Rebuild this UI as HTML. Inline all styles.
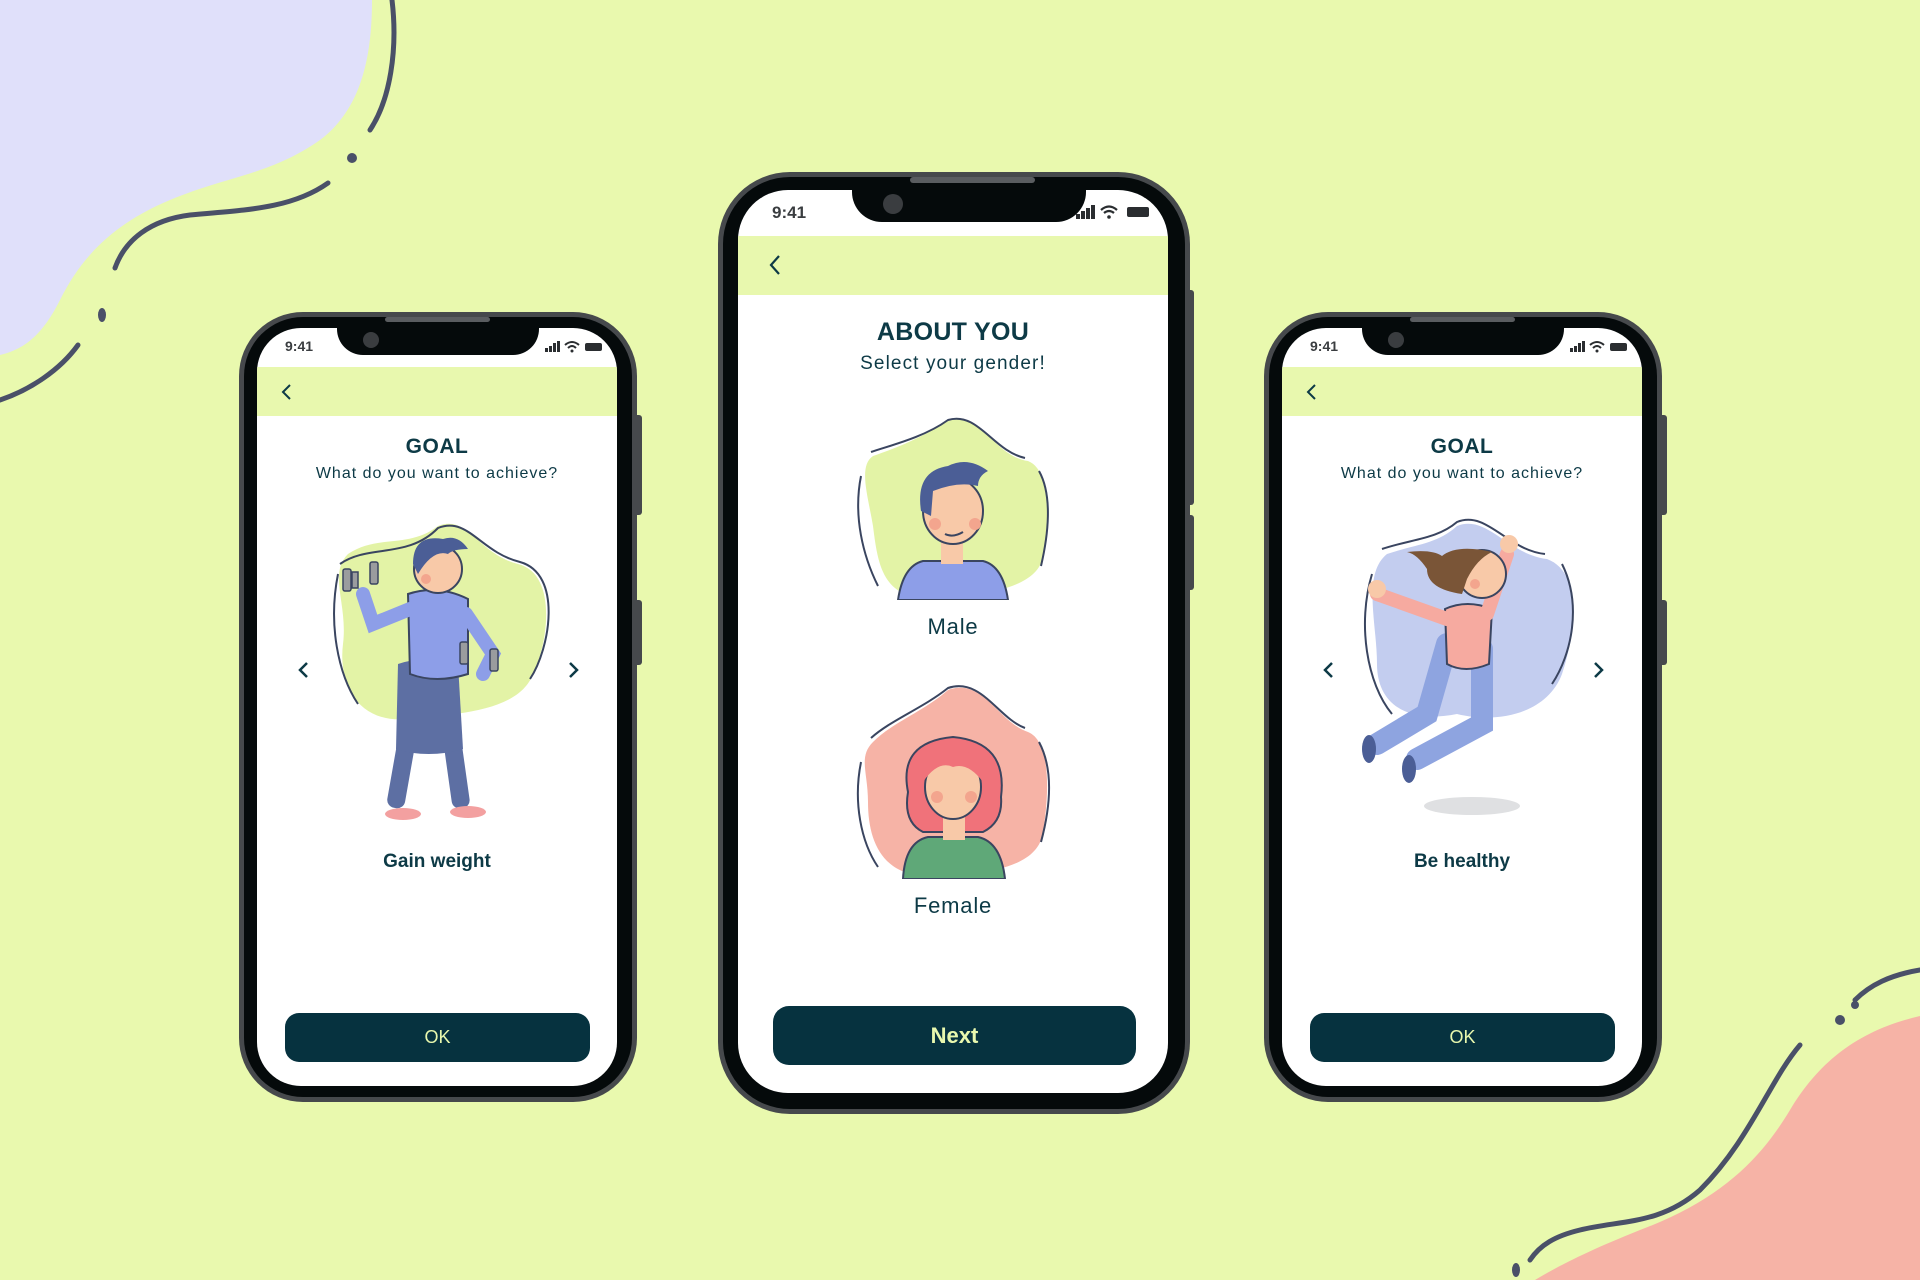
<!DOCTYPE html>
<html><head><meta charset="utf-8"><style>
*{margin:0;padding:0;box-sizing:border-box}
body{width:1920px;height:1280px;background:#e9f9ae;position:relative;overflow:hidden;font-family:"Liberation Sans",sans-serif;color:#0d3a46}
.ph{position:absolute;background:#46494c;border-radius:64px}
.bz{position:absolute;inset:5px;background:#050a0b;border-radius:59px}
.sc{position:absolute;background:#fff;border-radius:44px;overflow:hidden}
.hd{position:absolute;left:0;right:0;background:#e8f8ae}
.notch{position:absolute;background:#050a0b;border-radius:0 0 26px 26px}
.cam{position:absolute;background:#3a3d40;border-radius:50%}
.spk{position:absolute;background:#5a5d60;border-radius:3px}
.t{position:absolute;font-weight:bold;color:#3a3d40}
.c{position:absolute;left:0;right:0;text-align:center}
.btn{position:absolute;background:#06323f;color:#e8f8ae;text-align:center;border-radius:14px}
.side{position:absolute;background:#46494c;width:6px;border-radius:0 3px 3px 0}
</style></head><body>

<svg width="1920" height="1280" style="position:absolute;left:0;top:0">
<path d="M0 0 H372 C372 60 360 110 320 140 C270 175 230 175 170 200 C110 225 80 260 60 300 C40 340 20 350 0 355 Z" fill="#e0e0fa"/>
<path d="M392 0 C398 50 390 100 370 130" stroke="#4a5068" stroke-width="5" fill="none" stroke-linecap="round"/>
<path d="M328 183 C290 210 240 210 190 215 C150 220 125 240 115 268" stroke="#4a5068" stroke-width="5" fill="none" stroke-linecap="round"/>
<circle cx="352" cy="158" r="5" fill="#4a5068"/>
<ellipse cx="102" cy="315" rx="4" ry="7" fill="#4a5068"/>
<path d="M78 345 C60 370 30 390 0 400" stroke="#4a5068" stroke-width="5" fill="none" stroke-linecap="round"/>
<path d="M1920 1016 C1860 1030 1820 1060 1790 1110 C1760 1160 1720 1200 1640 1230 C1590 1250 1560 1265 1535 1280 H1920 Z" fill="#f6b3a6"/>
<path d="M1800 1045 C1770 1080 1750 1140 1700 1190 C1660 1225 1620 1220 1580 1230 C1555 1236 1540 1245 1530 1260" stroke="#4a5068" stroke-width="5" fill="none" stroke-linecap="round"/>
<path d="M1920 970 C1890 975 1870 985 1855 1000" stroke="#4a5068" stroke-width="5" fill="none" stroke-linecap="round"/>
<circle cx="1840" cy="1020" r="5" fill="#4a5068"/><circle cx="1855" cy="1005" r="4" fill="#4a5068"/>
<ellipse cx="1516" cy="1270" rx="4" ry="7" fill="#4a5068"/>
</svg>

<!-- LEFT PHONE -->
<div class="side" style="left:636px;top:415px;height:100px"></div>
<div class="side" style="left:636px;top:600px;height:65px"></div>
<div class="ph" style="left:239px;top:312px;width:398px;height:790px"><div class="bz"></div>
<div class="sc" style="left:18px;top:16px;width:360px;height:758px">
  <div class="hd" style="top:39px;height:49px"></div>
  <div class="t" style="left:28px;top:10px;font-size:14px">9:41</div>
  <svg style="position:absolute;left:288px;top:12px" width="62" height="14"><rect x="0" y="8" width="3" height="4" fill="#2a2d30"/><rect x="4" y="6" width="3" height="6" fill="#2a2d30"/><rect x="8" y="3" width="3" height="9" fill="#2a2d30"/><rect x="12" y="1" width="3" height="11" fill="#2a2d30"/><path d="M20 5 Q27 -1 34 5 M23 8 Q27 4 31 8" stroke="#2a2d30" stroke-width="2" fill="none"/><circle cx="27" cy="11" r="1.5" fill="#2a2d30"/><rect x="40" y="3" width="17" height="8" rx="2" fill="#2a2d30"/></svg>
  <svg style="position:absolute;left:22px;top:55px" width="16" height="18"><path d="M11 2 L4 9 L11 16" stroke="#0d3a46" stroke-width="2" fill="none"/></svg>
  <div class="c" style="top:107px;font-size:21px;font-weight:bold;letter-spacing:0.5px">GOAL</div>
  <div class="c" style="top:137px;font-size:16px;letter-spacing:1px">What do you want to achieve?</div>
  <svg style="position:absolute;left:40px;top:333px" width="14" height="18"><path d="M10 2 L3 9 L10 16" stroke="#0d3a46" stroke-width="2.5" fill="none"/></svg>
  <svg style="position:absolute;left:309px;top:333px" width="14" height="18"><path d="M4 2 L11 9 L4 16" stroke="#0d3a46" stroke-width="2.5" fill="none"/></svg>
  <svg style="position:absolute;left:61px;top:186px" width="240" height="312" viewBox="0 0 240 312">
    <path d="M30 40 C60 20 90 35 120 12 C150 0 160 40 200 50 C240 60 230 130 215 160 C200 200 130 200 90 205 C40 210 20 170 25 130 C30 90 10 60 30 40Z" fill="#e3f3a6"/>
    <path d="M22 50 C50 30 90 45 120 14 C150 2 162 38 202 48 C245 60 232 135 212 165 M20 60 C10 110 20 160 40 190" stroke="#3a4560" stroke-width="2" fill="none"/>
    <rect x="80" y="225" width="18" height="70" rx="8" fill="#5d6fa3" transform="rotate(10 89 225)"/>
    <rect x="125" y="225" width="18" height="70" rx="8" fill="#5d6fa3" transform="rotate(-8 134 225)"/>
    <path d="M80 150 Q110 140 140 150 L145 235 Q110 245 78 235Z" fill="#5d6fa3"/>
    <path d="M90 80 Q120 70 150 85 L150 160 Q118 170 92 160Z" fill="#8d9ee8" stroke="#3a4560" stroke-width="2"/>
    <path d="M92 95 L55 110 L45 80" stroke="#8d9ee8" stroke-width="14" fill="none" stroke-linecap="round"/>
    <path d="M148 100 L175 140 L165 160" stroke="#8d9ee8" stroke-width="14" fill="none" stroke-linecap="round"/>
    <circle cx="120" cy="55" r="24" fill="#f8c9a8" stroke="#3a4560" stroke-width="2"/>
    <path d="M95 50 Q95 20 125 25 Q140 20 150 35 Q135 35 130 40 Q115 35 100 60Z" fill="#4b5e96"/>
    <circle cx="108" cy="65" r="5" fill="#f3a58e"/>
    <g fill="#9a9c9e" stroke="#3a4560" stroke-width="1.5"><rect x="25" y="55" width="8" height="22" rx="2"/><rect x="34" y="58" width="6" height="16"/><rect x="52" y="48" width="8" height="22" rx="2"/><rect x="142" y="128" width="8" height="22" rx="2"/><rect x="172" y="135" width="8" height="22" rx="2"/></g>
    <ellipse cx="85" cy="300" rx="18" ry="6" fill="#f3a0a0"/><ellipse cx="150" cy="298" rx="18" ry="6" fill="#f3a0a0"/>
  </svg>
  <div class="c" style="top:523px;font-size:19px;font-weight:bold">Gain weight</div>
  <div class="btn" style="left:28px;top:685px;width:305px;height:49px;line-height:49px;font-size:18px">OK</div>
</div>
<div class="notch" style="left:98px;top:16px;width:202px;height:27px"></div>
<div class="cam" style="left:124px;top:20px;width:16px;height:16px"></div>
<div class="spk" style="left:146px;top:5px;width:105px;height:5px"></div>
</div>

<!-- CENTER PHONE -->
<div class="side" style="left:1188px;top:290px;height:215px"></div>
<div class="side" style="left:1188px;top:515px;height:75px"></div>
<div class="ph" style="left:718px;top:172px;width:472px;height:942px;border-radius:72px"><div class="bz" style="border-radius:67px"></div>
<div class="sc" style="left:20px;top:18px;width:430px;height:903px;border-radius:50px">
  <div class="hd" style="top:46px;height:59px"></div>
  <div class="t" style="left:34px;top:13px;font-size:17px">9:41</div>
  <svg style="position:absolute;left:338px;top:14px" width="76" height="16"><rect x="0" y="10" width="4" height="5" fill="#2a2d30"/><rect x="5" y="7" width="4" height="8" fill="#2a2d30"/><rect x="10" y="4" width="4" height="11" fill="#2a2d30"/><rect x="15" y="1" width="4" height="14" fill="#2a2d30"/><path d="M25 6 Q33 -1 41 6 M28 9 Q33 5 38 9" stroke="#2a2d30" stroke-width="2.2" fill="none"/><circle cx="33" cy="13" r="1.8" fill="#2a2d30"/><rect x="51" y="3" width="22" height="10" rx="2" fill="#2a2d30"/></svg>
  <svg style="position:absolute;left:28px;top:64px" width="18" height="22"><path d="M13 2 L5 11 L13 20" stroke="#0d3a46" stroke-width="2.2" fill="none"/></svg>
  <div class="c" style="top:128px;font-size:25px;font-weight:bold;letter-spacing:0.3px">ABOUT YOU</div>
  <div class="c" style="top:163px;font-size:19px;letter-spacing:1.1px">Select your gender!</div>
  <svg style="position:absolute;left:115px;top:226px" width="202" height="184" viewBox="0 0 202 184">
    <path d="M20 40 C50 30 70 20 95 5 C130 -5 140 40 175 45 C200 55 195 110 190 140 C185 175 120 180 80 182 C30 184 25 150 20 110 C15 80 5 50 20 40Z" fill="#e3f3a6"/>
    <path d="M18 36 C35 30 70 22 95 4 C125 -5 140 35 172 42 M186 55 C200 80 195 120 188 150 M8 60 C0 100 10 140 25 170" stroke="#3a4560" stroke-width="2" fill="none"/>
    <path d="M45 184 Q50 150 70 145 L130 145 Q150 150 155 184Z" fill="#8d9ee8" stroke="#3a4560" stroke-width="2"/>
    <rect x="88" y="120" width="22" height="28" fill="#f8c9a8"/>
    <ellipse cx="100" cy="95" rx="30" ry="33" fill="#f8c9a8" stroke="#3a4560" stroke-width="2"/>
    <path d="M68 95 Q62 55 95 50 Q115 40 135 55 Q125 60 125 70 Q105 65 80 75 L78 100Z" fill="#4b5e96"/>
    <circle cx="82" cy="108" r="6" fill="#f3a58e"/><circle cx="122" cy="108" r="6" fill="#f3a58e"/>
    <path d="M92 118 Q100 122 110 116" stroke="#3a4560" stroke-width="2" fill="none"/>
  </svg>
  <div class="c" style="top:424px;font-size:22px;letter-spacing:0.8px">Male</div>
  <svg style="position:absolute;left:115px;top:492px" width="202" height="197" viewBox="0 0 202 197">
    <path d="M20 60 C40 40 70 30 95 8 C130 -5 145 40 175 50 C200 60 195 120 190 150 C185 190 120 192 80 194 C30 196 15 160 15 120 C15 90 5 75 20 60Z" fill="#f6b3a6"/>
    <path d="M18 56 C38 38 70 26 95 6 C128 -5 145 36 172 46 M186 60 C202 90 196 130 188 160 M8 80 C0 120 8 160 25 185" stroke="#3a4560" stroke-width="2" fill="none"/>
    <path d="M55 110 Q45 60 100 55 Q155 60 148 115 Q150 140 130 150 L70 150 Q50 140 55 110Z" fill="#f0727a" stroke="#3a4560" stroke-width="2"/>
    <path d="M50 197 Q52 160 75 155 L125 155 Q148 160 152 197Z" fill="#5fa878" stroke="#3a4560" stroke-width="2"/>
    <rect x="90" y="130" width="22" height="28" fill="#f8c9a8"/>
    <ellipse cx="100" cy="105" rx="28" ry="32" fill="#f8c9a8" stroke="#3a4560" stroke-width="2"/>
    <path d="M70 100 Q70 65 100 68 Q128 66 130 100 Q115 80 100 85 Q85 78 70 100Z" fill="#f0727a"/>
    <circle cx="84" cy="115" r="6" fill="#f3a58e"/><circle cx="118" cy="115" r="6" fill="#f3a58e"/>
  </svg>
  <div class="c" style="top:703px;font-size:22px;letter-spacing:0.8px">Female</div>
  <div class="btn" style="left:35px;top:816px;width:363px;height:59px;line-height:59px;font-size:22px;font-weight:bold;border-radius:16px">Next</div>
</div>
<div class="notch" style="left:134px;top:18px;width:234px;height:32px;border-radius:0 0 30px 30px"></div>
<div class="cam" style="left:165px;top:22px;width:20px;height:20px"></div>
<div class="spk" style="left:192px;top:5px;width:125px;height:6px"></div>
</div>

<!-- RIGHT PHONE -->
<div class="side" style="left:1661px;top:415px;height:100px"></div>
<div class="side" style="left:1661px;top:600px;height:65px"></div>
<div class="ph" style="left:1264px;top:312px;width:398px;height:790px"><div class="bz"></div>
<div class="sc" style="left:18px;top:16px;width:360px;height:758px">
  <div class="hd" style="top:39px;height:49px"></div>
  <div class="t" style="left:28px;top:10px;font-size:14px">9:41</div>
  <svg style="position:absolute;left:288px;top:12px" width="62" height="14"><rect x="0" y="8" width="3" height="4" fill="#2a2d30"/><rect x="4" y="6" width="3" height="6" fill="#2a2d30"/><rect x="8" y="3" width="3" height="9" fill="#2a2d30"/><rect x="12" y="1" width="3" height="11" fill="#2a2d30"/><path d="M20 5 Q27 -1 34 5 M23 8 Q27 4 31 8" stroke="#2a2d30" stroke-width="2" fill="none"/><circle cx="27" cy="11" r="1.5" fill="#2a2d30"/><rect x="40" y="3" width="17" height="8" rx="2" fill="#2a2d30"/></svg>
  <svg style="position:absolute;left:22px;top:55px" width="16" height="18"><path d="M11 2 L4 9 L11 16" stroke="#0d3a46" stroke-width="2" fill="none"/></svg>
  <div class="c" style="top:107px;font-size:21px;font-weight:bold;letter-spacing:0.5px">GOAL</div>
  <div class="c" style="top:137px;font-size:16px;letter-spacing:1px">What do you want to achieve?</div>
  <svg style="position:absolute;left:40px;top:333px" width="14" height="18"><path d="M10 2 L3 9 L10 16" stroke="#0d3a46" stroke-width="2.5" fill="none"/></svg>
  <svg style="position:absolute;left:309px;top:333px" width="14" height="18"><path d="M4 2 L11 9 L4 16" stroke="#0d3a46" stroke-width="2.5" fill="none"/></svg>
  <svg style="position:absolute;left:65px;top:186px" width="240" height="312" viewBox="0 0 240 312">
    <path d="M40 40 C70 30 90 30 110 12 C140 0 160 40 200 45 C240 60 225 130 215 160 C200 200 150 210 110 200 C60 210 30 190 30 150 C30 110 15 60 40 40Z" fill="#c3cdef"/>
    <path d="M35 35 C65 25 90 25 110 8 C140 -4 160 36 198 40 M215 50 C235 90 225 140 205 170 M25 60 C10 110 20 170 45 200" stroke="#3a4560" stroke-width="2" fill="none"/>
    <path d="M100 130 L80 200 L30 230" stroke="#8ea4e0" stroke-width="22" fill="none" stroke-linecap="round"/>
    <path d="M135 135 L135 210 L70 245" stroke="#8ea4e0" stroke-width="22" fill="none" stroke-linecap="round"/>
    <ellipse cx="22" cy="235" rx="7" ry="14" fill="#4b5e96"/><ellipse cx="62" cy="255" rx="7" ry="14" fill="#4b5e96"/>
    <path d="M98 95 Q120 85 145 95 L142 150 Q118 160 100 150Z" fill="#f6aaa0" stroke="#3a4560" stroke-width="2"/>
    <path d="M100 105 L30 80" stroke="#f6aaa0" stroke-width="14" stroke-linecap="round"/>
    <path d="M140 100 L160 40" stroke="#f6aaa0" stroke-width="14" stroke-linecap="round"/>
    <circle cx="30" cy="75" r="9" fill="#f8c9a8"/><circle cx="162" cy="30" r="9" fill="#f8c9a8"/>
    <circle cx="135" cy="60" r="24" fill="#f8c9a8" stroke="#3a4560" stroke-width="2"/>
    <path d="M115 80 Q80 75 80 55 Q70 40 60 38 Q85 35 95 42 Q110 30 145 38 Q130 45 120 65Z" fill="#7a5537"/>
    <circle cx="128" cy="70" r="5" fill="#f3a58e"/>
    <ellipse cx="125" cy="292" rx="48" ry="9" fill="#dfe0e2"/>
  </svg>
  <div class="c" style="top:523px;font-size:19px;font-weight:bold">Be healthy</div>
  <div class="btn" style="left:28px;top:685px;width:305px;height:49px;line-height:49px;font-size:18px">OK</div>
</div>
<div class="notch" style="left:98px;top:16px;width:202px;height:27px"></div>
<div class="cam" style="left:124px;top:20px;width:16px;height:16px"></div>
<div class="spk" style="left:146px;top:5px;width:105px;height:5px"></div>
</div>

</body></html>
